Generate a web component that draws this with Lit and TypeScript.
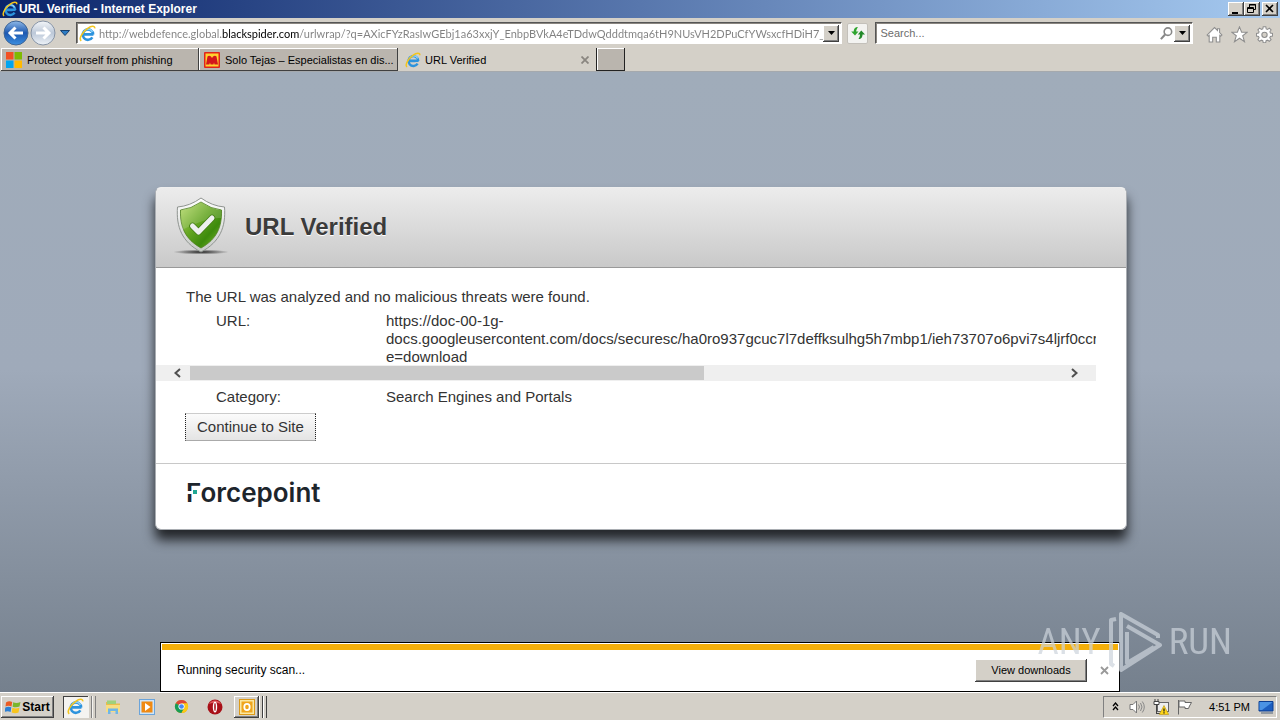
import { LitElement, html, css, svg } from "lit";
import { customElement, property } from "lit/decorators.js";

const ieLogo = (size: number) => html`<svg width=${size} height=${size} viewBox="0 0 16 16" aria-hidden="true">
  <path d="M4.200 9h6.200M13.600 8.800H5M13.300 9A4.900 4.900 0 1 0 12.600 11.600" fill="none" stroke="#2c93dd" stroke-width="2.400"/>
  <path d="M12.600 6.600A4.400 4.400 0 0 0 4.600 6.400" fill="none" stroke="#8fd2f8" stroke-width="1.300"/>
  <path d="M2.100 14.900C-.6 13 3.400 6.400 8.200 3.100 11.500.8 15 .3 14.800 3.200" fill="none" stroke="#f3c51c" stroke-width="1.500"/>
</svg>`;

const icons = {
  microsoft: svg`<path fill="#f25022" d="M0 0h7.500v7.500H0z"/><path fill="#7fba00" d="M8.500 0H16v7.500H8.500z"/><path fill="#00a4ef" d="M0 8.500h7.500V16H0z"/><path fill="#ffb900" d="M8.500 8.500H16V16H8.500z"/>`,
  tejas: svg`<rect width="16" height="16" rx="1" fill="#e2231a"/><rect x="1.500" y="1.500" width="13" height="13" fill="#ffd22e"/><path d="M2 12.500 3.500 4.500Q5 3 7 4.500L8 6l1-1.500Q11 3 12.500 4.500l1.500 8h-3.500l-.5-2-.5 2h-3l-.5-2-.6 2z" fill="#d3161b"/>`,
  home: svg`<path d="M1 8.500 8 1.500l2.800 2.700V2.500h2v3.700L15 8.500l-1 1-1-.8V15H9.700v-4.500H6.300V15H3V8.700l-1 .8z" fill="#fff" stroke="#8e8e8e"/>`,
  star: svg`<path d="m8 .8 2 5h5.300L11 9.200l1.700 5.500L8 11.500l-4.700 3.200L5 9.200.7 5.800H6z" fill="#fff" stroke="#8e8e8e"/>`,
  gear: svg`<path d="M6.800.7h2.400l.4 2 1.300.6L12.600 2l1.600 1.700-1.100 1.700.5 1.300 2 .4v2.300l-2 .4-.6 1.300 1.200 1.700-1.700 1.600-1.700-1.100-1.300.5-.4 2H6.800l-.4-2-1.300-.5-1.700 1.100-1.600-1.600 1.100-1.700-.5-1.300-2-.4V7.100l2-.4.5-1.300-1.100-1.700L3.400 2l1.700 1.200 1.300-.6z" fill="#fff" stroke="#8e8e8e"/><circle cx="8" cy="8.300" r="2.500" fill="#d4d0c8" stroke="#8e8e8e"/>`,
  refresh: svg`<path d="M8 2C5 2 3.700 4 3.700 6.500H1.200L5 10.500l3.500-4H6.200C6.200 5 6.800 4 8 2z" fill="#2fa52f"/><path d="M8.500 14c3 0 4-2 4-4.500H15L11.300 5.500 7.800 9.500H10c0 1.500-.4 2.500-1.500 4.500z" fill="#23892a"/>`,
  magnifier: svg`<circle cx="9.500" cy="6" r="4" fill="none" stroke="#888" stroke-width="1.700"/><path d="M6.500 9 2 14" stroke="#888" stroke-width="2.200"/>`,
  folder: svg`<path d="M1 3h5l1 1.500h8V13H1z" fill="#e9bd4c"/><path d="M2 1.500h9V5H2z" fill="#9fd17c"/><path d="M1 6h14v7H1z" fill="#f7dd83"/><path d="M3 15V9.500h10V15h-2.500v-3h-5v3z" fill="#6fb6e6"/>`,
  media: svg`<rect x=".5" y=".5" width="15" height="15" fill="#cfe5f8" stroke="#6ba4da"/><rect x="2.500" y="2.500" width="11" height="11" fill="#f08a13"/><path d="m6 4 5.500 4L6 12z" fill="#fff"/>`,
  chrome: svg`<circle cx="8" cy="8" r="7" fill="#ddac19"/><path d="M8 8 1.900 4.500A7 7 0 0 1 14.100 4.500z" fill="#dc4437"/><path d="M8 8 1.900 4.500A7 7 0 0 0 8 15l3-5.300z" fill="#169c57"/><path d="M8 4.500h6.100A7 7 0 0 1 8 15l3.200-6z" fill="#fbc916"/><circle cx="8" cy="8" r="3.300" fill="#fff"/><circle cx="8" cy="8" r="2.500" fill="#4687f4"/>`,
  opera: svg`<circle cx="8" cy="8" r="7.500" fill="#a80f17"/><path d="M2 5a7 7 0 0 1 12 0q-6-3-12 0z" fill="#e05a5e"/><ellipse cx="8" cy="8" rx="2.200" ry="5.500" fill="#fff"/><ellipse cx="8" cy="8" rx=".8" ry="4" fill="#a80f17"/>`,
  outlook: svg`<rect x=".5" y=".5" width="15" height="15" fill="#fbe7a1" stroke="#dd9a18"/><rect x="2.500" y="2.500" width="11" height="11" fill="#efa51d"/><ellipse cx="8" cy="8" rx="2.700" ry="3.200" fill="none" stroke="#fff" stroke-width="1.800"/>`,
  speaker: svg`<path d="M1 5.500h3L7.500 2v12L4 10.500H1z" fill="#fff" stroke="#777"/><path d="M9.500 5.500q2 2.500 0 5M11.500 4q3 4 0 8M13.300 2.500q4 5.500 0 11" fill="none" stroke="#888"/>`,
  network: svg`<rect x="4.500" y="3.500" width="11" height="9" fill="#eee" stroke="#666"/><path d="M1 2.500h5v3H1z" fill="#fff" stroke="#444"/><path d="M2 2V0M5 2V0M3.500 6v9M3 14.500h5" fill="none" stroke="#444"/><path d="m11 6.500 4.700 9H6.300z" fill="#ffd617" stroke="#b79210" stroke-width=".6"/><path d="M11 9.500v3M11 13.200v1.200" stroke="#222" stroke-width="1.300"/>`,
  flag: svg`<path d="M1.500 1v14.500M2 2h6v1.500h6.500L12.500 7l-1 2.500H8V8H2z" fill="#fff" stroke="#666"/>`,
  screen: svg`<path d="M1 2.500h14V12H1z" fill="#1d5fc0" stroke="#0c3e91"/><path d="M1.500 3h13L4 11H1.500z" fill="#4b93e4"/><path d="M3 14h12" stroke="#7d8795" stroke-width="1.500"/>`,
  windows: svg`<path d="M1 3.500Q4 1.500 7.200 3L6.500 7.500Q3.500 6 .5 7.500z" fill="#ea5b23"/><path d="M8.200 3.300Q11.500 5 15.500 3L14.500 7.500Q11 9 7.600 7.700z" fill="#7ab62c"/><path d="M.3 8.500q3-1.500 6-.2L5.600 13q-3-1.500-6 0z" fill="#2b7fd4"/><path d="M7.400 8.800q3.200 1.500 7 0L13.500 13.500q-3.300 1.500-6.800 0z" fill="#f8c51d"/>`,
};

const icon = (name: keyof typeof icons, size = 16) =>
  html`<svg width=${size} height=${size} viewBox="0 0 16 16" aria-hidden="true">${icons[name]}</svg>`;

const shared = css`
  * { box-sizing: border-box; }
  svg { display: block; flex: none; }
  button, input { font: inherit; color: inherit; border: 0; margin: 0; padding: 0; background: none; outline: 0; }
  button { display: flex; align-items: center; justify-content: center; flex: none; }
  .raised {
    background: #d4d0c8;
    box-shadow: inset -1px -1px #404040, inset 1px 1px #fff, inset -2px -2px #808080;
  }
`;

const chromeFont = css`
  :host { font: 11px/14px "Liberation Sans", Arial, sans-serif; color: #000; }
`;

@customElement("browser-chrome")
class BrowserChrome extends LitElement {
  static styles = [shared, chromeFont, css`
    :host { display: block; background: #d4d0c8; }
    .title { display: flex; align-items: center; gap: 1px; height: 18px; padding: 0 2px; color: #fff; font-weight: 700; font-size: 12px;
      background: linear-gradient(90deg, #0a246a, #a6caf0); }
    .title h1 { flex: 1; margin: 0; font: inherit; }
    .controls { display: flex; }
    .controls button { width: 16px; height: 14px; }
    .controls button:last-child { margin-left: 2px; }
    .nav { display: flex; align-items: center; height: 30px; padding: 0 7px 0 2px; }
    .round { width: 27px; height: 26px; }
    .recent { width: 18px; }
    .field { display: flex; align-items: center; height: 22px; background: #fff; border: 1px solid; border-color: #555 #fff #fff #555; box-shadow: inset 1px 1px #8a8680; padding: 1px 2px; }
    .address { flex: 769 1 0; margin-left: 2px; }
    .search { flex: 315 1 0; margin-left: 7px; }
    .url { flex: 1; min-width: 0; height: 16px; margin: 0 0 0 3px; font-family: Lato, "Liberation Sans", sans-serif; -webkit-text-fill-color: transparent;
      background: linear-gradient(90deg, #808080 122px, #000 122px, #000 200px, #808080 200px); -webkit-background-clip: text; background-clip: text; }
    .query { flex: 1; min-width: 0; height: 16px; padding-left: 2px; }
    .query::placeholder { color: #6d6d6d; opacity: 1; }
    .drop { width: 16px; height: 17px; }
    .reload { width: 21px; height: 21px; margin-left: 5px; background: #f3f3f1; border: 1px solid #c3c0ba; border-radius: 2px; }
    .tools { display: flex; gap: 8px; margin: 2px 0 0 13px; }
    .tabs { display: flex; height: 23px; padding-left: 1px; }
    .chrome-edge { height: 1px; background: #a5a9ad; }
    .tab { justify-content: flex-start; gap: 5px; width: 198px; padding: 1px 2px 0 5px; background: #bab5ae;
      box-shadow: inset -1px -1px #404040, inset 1px 1px #fff; }
    .tab span { flex: 1; text-align: left; white-space: nowrap; overflow: hidden; text-overflow: ellipsis; }
    .tab + .tab { width: 199px; }
    .tab.active { background: none; box-shadow: none; margin-left: 2px; width: 196px; gap: 4px; padding-right: 7px; }
    .fresh { width: 29px; background: #bab5ae; box-shadow: inset -1px -1px #222, inset 1px 0 #222, inset 2px 1px #fff; }
  `];

  render() {
    const arrow = html`<svg width="7" height="4" viewBox="0 0 7 4"><path d="M0 0h7L3.500 4z"/></svg>`;
    return html`
      <header class="title">
        ${ieLogo(16)}<h1>URL Verified - Internet Explorer</h1>
        <div class="controls">
          <button class="raised" aria-label="Minimize"><svg width="16" height="14"><path d="M4 10h6v2H4z"/></svg></button>
          <button class="raised" aria-label="Restore"><svg width="16" height="14" fill="none" stroke="#000"><path d="M5.500 5V2.500h6v5H10M5 3h7M3.500 5.500h6v5h-6zM3 6.500h7"/></svg></button>
          <button class="raised" aria-label="Close"><svg width="16" height="14" stroke="#000" stroke-width="1.600"><path d="m4 3 7 7M11 3l-7 7"/></svg></button>
        </div>
      </header>
      <nav class="nav">
        <button class="round" aria-label="Back"><svg width="26" height="26" viewBox="0 0 26 26">
          <defs><linearGradient id="b" x2="0" y2="1"><stop stop-color="#8fb9e8"/><stop offset=".5" stop-color="#1d58b0"/><stop offset="1" stop-color="#3c8fe0"/></linearGradient></defs>
          <circle cx="13" cy="13" r="12" fill="url(#b)" stroke="#3f6595"/><path d="M20 13H8M12.500 7.500 7 13l5.500 5.500" fill="none" stroke="#fff" stroke-width="3"/></svg></button>
        <button class="round" aria-label="Forward"><svg width="26" height="26" viewBox="0 0 26 26">
          <defs><linearGradient id="f" x2="0" y2="1"><stop stop-color="#f4f6f9"/><stop offset=".5" stop-color="#bcc8d8"/><stop offset="1" stop-color="#eef3f8"/></linearGradient></defs>
          <circle cx="13" cy="13" r="12" fill="url(#f)" stroke="#8794a6"/><path d="M6 13h12M13.500 7.500 19 13l-5.500 5.500" fill="none" stroke="#fff" stroke-width="3"/></svg></button>
        <button class="recent" aria-label="Recent pages"><svg width="10" height="6"><path d="M.5.500h9L5 5.500z" fill="#2c7cc4" stroke="#153f6e"/></svg></button>
        <div class="field address">
          ${ieLogo(17)}
          <input class="url" aria-label="Address" .value=${"http://webdefence.global.blackspider.com/urlwrap/?q=AXicFYzRasIwGEbj1a63xxjY_EnbpBVkA4eTDdwQdddtmqa6tH9NUsVH2DPuCfYWsxcfHDiH7_6O_"}>
          <button class="drop raised" aria-label="Show addresses">${arrow}</button>
        </div>
        <button class="reload" aria-label="Refresh">${icon("refresh")}</button>
        <div class="field search">
          <input class="query" aria-label="Search" placeholder="Search...">
          ${icon("magnifier", 15)}
          <button class="drop raised" aria-label="Search options">${arrow}</button>
        </div>
        <div class="tools">
          <button aria-label="Home">${icon("home", 17)}</button>
          <button aria-label="Favorites">${icon("star", 17)}</button>
          <button aria-label="Tools">${icon("gear", 17)}</button>
        </div>
      </nav>
      <div class="tabs">
        <button class="tab">${icon("microsoft")}<span>Protect yourself from phishing</span></button>
        <button class="tab">${icon("tejas")}<span>Solo Tejas – Especialistas en dis...</span></button>
        <button class="tab active">${ieLogo(16)}<span>URL Verified</span>
          <svg width="8" height="8"><path d="m.5.500 7 7m0-7-7 7" stroke="#8a8680" stroke-width="1.800"/></svg></button>
        <button class="fresh" aria-label="New tab"></button>
      </div>
      <div class="chrome-edge"></div>`;
  }
}

@customElement("verified-card")
class VerifiedCard extends LitElement {
  @property() category = "Search Engines and Portals";

  static styles = [shared, css`
    :host { display: block; font: 15px/18px "Liberation Sans", Arial, sans-serif; color: #333; background: #fff;
      border: 1px solid #a9adb2; border-top-color: #eee; border-radius: 6px; overflow: hidden; box-shadow: 0 10px 12px rgba(0, 0, 0, .75); }
    .head { display: flex; align-items: center; gap: 16px; height: 80px; padding: 0 17px 2px; border-bottom: 1px solid #999; background: linear-gradient(#ececec, #c9c9c9); }
    .head h2 { margin: 0; font-size: 24px; line-height: 28px; color: #3b3b3b; text-shadow: 0 1px #fff; }
    .body { display: flex; flex-direction: column; padding: 20px 30px 22px 0; }
    .body p { margin: 0 0 6px 30px; }
    .row { display: flex; margin: 0; }
    .row dt { flex: none; width: 170px; margin-left: 60px; }
    .row dd { margin: 0; min-width: 0; overflow: hidden; white-space: nowrap; }
    .bar { display: flex; align-items: center; height: 16px; margin: -1px 0 7px; background: #efefef; }
    .bar button { width: 34px; height: 16px; }
    .bar button:first-child { padding-left: 8px; }
    .bar button:last-child { padding-right: 10px; }
    .track { flex: 1; height: 14px; }
    .thumb { width: 59%; height: 14px; background: #cacaca; }
    .go { align-self: flex-start; margin: 7px 0 0 29px; height: 28px; padding: 0 11px; border: 1px solid; border-color: #ccc #222 #aaa; border-left-style: dotted; border-right-style: dotted; background: linear-gradient(#fbfbfb, #e4e4e4); }
    .foot { height: 66px; padding: 14px 30px; border-top: 1px solid #c8c8c8; }
    .brand { position: relative; display: inline-block; font: 600 26px/30px Inter, sans-serif; color: #1d252c; }
    .brand svg { position: absolute; left: 0; top: 5px; }
  `];

  render() {
    return html`
      <header class="head">
        <svg width="56" height="60" viewBox="0 0 56 60" aria-hidden="true">
          <defs>
            <linearGradient id="g" x2="1" y2="1"><stop stop-color="#b9dc6b"/><stop offset=".45" stop-color="#62a41f"/><stop offset=".7" stop-color="#3d8a0c"/><stop offset="1" stop-color="#7fc22d"/></linearGradient>
            <radialGradient id="s"><stop stop-color="#222"/><stop offset="1" stop-color="#222" stop-opacity="0"/></radialGradient>
            <linearGradient id="w" x2="0" y2="1"><stop stop-color="#fff"/><stop offset="1" stop-color="#c5c9c5"/></linearGradient>
          </defs>
          <ellipse cx="28" cy="55" rx="28" ry="2.500" fill="url(#s)"/>
          <path d="M28 1Q17 9 4.500 10C3 30 9 45 28 55 47 45 53 30 51.500 10Q39 9 28 1z" fill="url(#w)" stroke="#8f9490"/>
          <path d="M28 5Q18 12 7.500 13C7 30 12 42 28 51 44 42 49 30 48.500 13Q38 12 28 5z" fill="url(#g)" stroke="#4b7d1b" stroke-width=".8"/>
          <path d="M8 13Q18 12 28 5 38 12 48 13L48 21Q34 20 9 33 7.500 23 8 13z" fill="#fff" opacity=".15"/>
          <path d="m19.500 29 6 6L39 21" fill="none" stroke="#427c14" stroke-width="6.500" stroke-linecap="round" stroke-linejoin="round"/>
          <path d="m19.500 29 6 6L39 21" fill="none" stroke="#eef0ee" stroke-width="5" stroke-linecap="round" stroke-linejoin="round"/>
        </svg>
        <h2>URL Verified</h2>
      </header>
      <div class="body">
        <p>The URL was analyzed and no malicious threats were found.</p>
        <dl class="row"><dt>URL:</dt><dd>https://doc-00-1g-<br>docs.googleusercontent.com/docs/securesc/ha0ro937gcuc7l7deffksulhg5h7mbp1/ieh73707o6pvi7s4ljrf0ccr<br>e=download</dd></dl>
        <div class="bar">
          <button aria-label="Scroll left"><svg width="9" height="10"><path d="M7 1 2.500 5 7 9" fill="none" stroke="#505050" stroke-width="2"/></svg></button>
          <div class="track"><div class="thumb"></div></div>
          <button aria-label="Scroll right"><svg width="9" height="10"><path d="M2 1 6.500 5 2 9" fill="none" stroke="#505050" stroke-width="2"/></svg></button>
        </div>
        <dl class="row"><dt>Category:</dt><dd>${this.category}</dd></dl>
        <button class="go">Continue to Site</button>
      </div>
      <footer class="foot">
        <div class="brand">Forcepoint<svg width="14" height="22"><path d="M6 4h8v17H6zM0 8h14v3H0z" fill="#fff"/><path d="M7 7h4v4H7z" fill="#1fa894"/></svg></div>
      </footer>`;
  }
}

@customElement("download-bar")
class DownloadBar extends LitElement {
  static styles = [shared, chromeFont, css`
    :host { display: flex; align-items: center; height: 50px; padding: 6px 10px 0 16px; background: #fff; border: 1px solid #000; }
    .stripe { position: absolute; inset: 1px 1px auto; height: 6px; background: #f4af0a; }
    .message { flex: 1; font-size: 12px; }
    .view { width: 112px; height: 23px; }
    .close { margin-left: 13px; width: 9px; height: 9px; }
  `];

  render() {
    return html`<div class="stripe"></div>
      <div class="message" role="status">Running security scan...</div>
      <button class="view raised">View downloads</button>
      <button class="close" aria-label="Close"><svg width="9" height="9"><path d="m1 1 7 7m0-7L1 8" stroke="#999" stroke-width="1.800"/></svg></button>`;
  }
}

@customElement("task-bar")
class TaskBar extends LitElement {
  static styles = [shared, chromeFont, css`
    :host { display: flex; align-items: center; height: 28px; padding: 0 3px 0 1px; background: #d4d0c8; border-top: 1px solid #fff; }
    .start { width: 53px; height: 22px; gap: 1px; font-weight: 700; font-size: 12px; }
    .apps { display: flex; align-items: center; flex: 1; margin-left: 9px; }
    .apps button { width: 34px; height: 22px; }
    .apps .current { width: 25px; background: #f4f3f0; box-shadow: inset 1px 1px #404040; }
    .sliver { width: 4px; height: 22px; border-right: 1px solid #404040; border-left: 1px solid #fff; }
    .apps .mail { width: 25px; margin-left: 2px; }
    .apps .sunken { border-color: #f4f3f0; border-right-color: #808080; }
    .tray { display: flex; align-items: center; gap: 8px; height: 22px; padding: 0 2px 0 8px; border: 1px solid; border-color: #808080 #fff #fff #808080; }
    .chevron { margin-right: 2px; }
    .time { margin: 0 0 0 8px; }
  `];

  render() {
    return html`
      <button class="start raised">${icon("windows")}Start</button>
      <div class="apps">
        <button class="current" aria-label="Internet Explorer">${ieLogo(17)}</button><i class="sliver sunken"></i><i class="sliver sunken"></i>
        <button aria-label="Explorer">${icon("folder")}</button>
        <button aria-label="Media Player">${icon("media")}</button>
        <button aria-label="Chrome">${icon("chrome", 15)}</button>
        <button aria-label="Opera">${icon("opera")}</button>
        <button class="mail raised" aria-label="Outlook">${icon("outlook")}</button><i class="sliver"></i><i class="sliver"></i>
      </div>
      <div class="tray">
        <svg class="chevron" width="7" height="9"><path d="m1 4 2.500-3L6 4M1 8l2.500-3L6 8" fill="none" stroke="#000" stroke-width="1.300"/></svg>
        ${icon("speaker")}${icon("network")}${icon("flag")}
        <time class="time">4:51 PM</time>
        ${icon("screen")}
      </div>`;
  }
}

@customElement("app-root")
class AppRoot extends LitElement {
  static styles = [shared, css`
    :host { display: flex; flex-direction: column; min-height: 100vh; }
    .page { flex: 1; position: relative; padding: 115px 152px 0 154px; background: linear-gradient(#a0acba, #9faaba 48%, #75808d); }
    verified-card { max-width: 972px; margin: 0 auto; }
    .notice { position: absolute; left: 160px; right: 160px; bottom: 0; }
    .watermark { position: absolute; right: 48px; bottom: 18px; display: flex; align-items: center; gap: 5px; color: #cdd4dc; opacity: .7;
      font: 400 37px/64px "Roboto Condensed", "Open Sans Condensed", Roboto, sans-serif; pointer-events: none; }
  `];

  render() {
    return html`
      <browser-chrome></browser-chrome>
      <main class="page">
        <verified-card></verified-card>
        <download-bar class="notice"></download-bar>
        <div class="watermark"><span>ANY</span>
          <svg width="58" height="64" viewBox="0 0 58 64" fill="none" stroke="#cdd4dc" stroke-width="4" stroke-linejoin="round"><path d="M10 9 5 10v44l3 2M52 28V25L15 4v56L54 35 21 16M48 37 21 53V22"/></svg>
          <span>RUN</span></div>
      </main>
      <task-bar></task-bar>`;
  }
}
